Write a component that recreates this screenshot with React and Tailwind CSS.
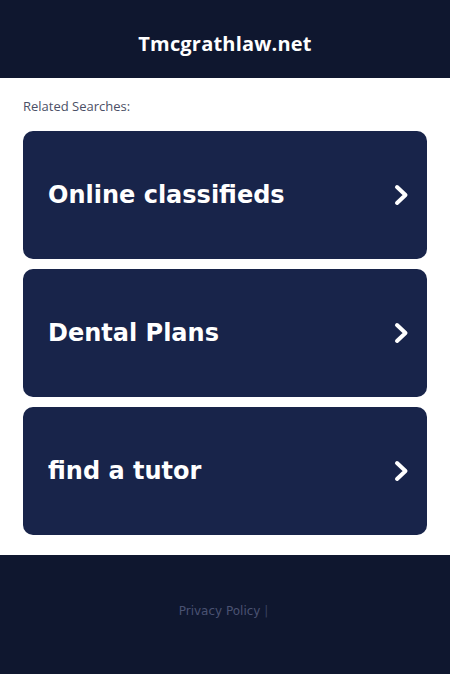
export default function App() {
  const items = ["Online classifieds", "Dental Plans", "find a tutor"];
  return (
    <div className="min-h-[674px] flex flex-col bg-white">
      <header className="h-[78px] bg-[#0f172f] flex items-center justify-center pt-[10px]">
        <h1 className="text-white text-[20px] font-bold tracking-[0.2px]" style={{ fontFamily: '"Open Sans", "Noto Sans", sans-serif' }}>
          Tmcgrathlaw.net
        </h1>
      </header>
      <main className="px-[23px] pt-[20px] pb-[20px] bg-white">
        <div className="text-[13px] text-[#4b5066] font-medium mb-[17px] leading-[16px]" style={{ fontFamily: '"Open Sans", "Noto Sans", sans-serif' }}>
          Related Searches:
        </div>
        <div className="flex flex-col gap-[10px]">
          {items.map((t) => (
            <div key={t} className="h-[128px] rounded-[10px] bg-[#18244a] flex items-center justify-between pl-[25px] pr-[16px]">
              <span className="text-white text-[24px] font-bold" style={{ fontFamily: '"DejaVu Sans", sans-serif' }}>{t}</span>
              <svg width="20" height="26" viewBox="0 0 20 26">
                <path d="M6 5 L14.5 13 L6 21" fill="none" stroke="white" strokeWidth="4" strokeLinecap="round" strokeLinejoin="round" />
              </svg>
            </div>
          ))}
        </div>
      </main>
      <footer className="flex-1 bg-[#0f172f] flex justify-center pt-[47px] pr-[3px]">
        <div className="text-[12px] text-[#4a5272]" style={{ fontFamily: '"DejaVu Sans", sans-serif' }}>
          Privacy Policy <span className="text-[#3a4160]">|</span>
        </div>
      </footer>
    </div>
  );
}
